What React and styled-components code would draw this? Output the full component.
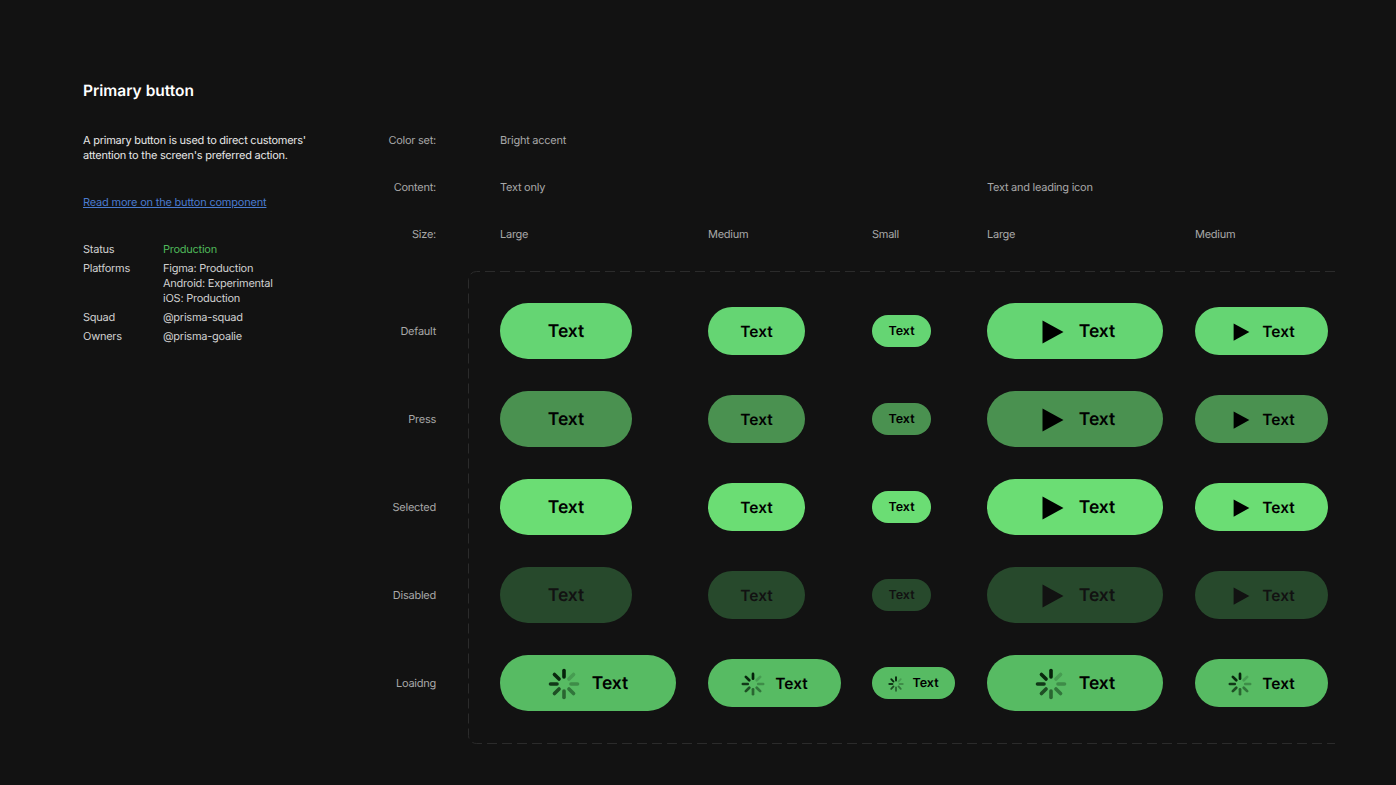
import React from 'react';
import styled, { createGlobalStyle } from 'styled-components';

const GlobalStyle = createGlobalStyle`
  html, body { margin: 0; padding: 0; background: #121212; }
  body {
    font-family: "Inter", "Liberation Sans", sans-serif;
    text-rendering: geometricPrecision;
  }
`;

const sizes = {
  large: { height: 56, plain: 132, icon: 176, font: 17.5, box: 32, gap: 12 },
  medium: { height: 48, plain: 97, icon: 133, font: 15.5, box: 24, gap: 10 },
  small: { height: 32, plain: 59, icon: 83, font: 12.5, box: 16, gap: 8 },
};

const stateColors = {
  default: { bg: '#65d573', fg: '#000' },
  press: { bg: '#4a9150', fg: '#000' },
  selected: { bg: '#6bdd74', fg: '#000' },
  disabled: { bg: '#27492c', fg: '#121212' },
  loading: { bg: '#57bb63', fg: '#000' },
};

const columns = '208px 164px 115px 208px 133px';

function PlayIcon({ size }) {
  return (
    <svg width={size} height={size} viewBox="0 0 32 32" fill="currentColor">
      <path d="M7.5 4.5v23L28.5 16z" />
    </svg>
  );
}

const spokes = [
  [0, 1], [45, 0.2], [90, 0.3], [135, 0.45],
  [180, 0.55], [225, 0.7], [270, 0.85], [315, 0.95],
];

function Spinner({ size }) {
  return (
    <svg width={size} height={size} viewBox="0 0 32 32" fill="none" stroke="#05210a" strokeWidth="3.6" strokeLinecap="round">
      {spokes.map(([angle, opacity]) => (
        <line key={angle} x1="16" y1="2.5" x2="16" y2="9" opacity={opacity} transform={`rotate(${angle} 16 16)`} />
      ))}
    </svg>
  );
}

function DemoButton({ size, state, content }) {
  const hasIcon = content !== 'text';
  const box = sizes[size].box;
  return (
    <Pill $size={size} $state={state} $wide={hasIcon}>
      {content === 'play' && <PlayIcon size={box} />}
      {content === 'spinner' && <Spinner size={box} />}
      Text
    </Pill>
  );
}

const rows = [
  { label: 'Default', state: 'default' },
  { label: 'Press', state: 'press' },
  { label: 'Selected', state: 'selected' },
  { label: 'Disabled', state: 'disabled' },
  { label: 'Loaidng', state: 'loading' },
];

function App() {
  return (
    <Page>
      <GlobalStyle />
      <Sidebar>
        <Title>Primary button</Title>
        <Description>
          A primary button is used to direct customers'<br />
          attention to the screen's preferred action.
        </Description>
        <ReadMore href="#">Read more on the button component</ReadMore>
        <MetaList>
          <dt>Status</dt>
          <MetaValue $green>Production</MetaValue>
          <dt>Platforms</dt>
          <MetaValue>Figma: Production<br />Android: Experimental<br />iOS: Production</MetaValue>
          <dt>Squad</dt>
          <MetaValue>@prisma-squad</MetaValue>
          <dt>Owners</dt>
          <MetaValue>@prisma-goalie</MetaValue>
        </MetaList>
      </Sidebar>
      <Main>
        <SpecGrid>
          <SpecLabel>Color set:</SpecLabel>
          <SpecValue $span={5}>Bright accent</SpecValue>
          <SpecLabel>Content:</SpecLabel>
          <SpecValue $span={3}>Text only</SpecValue>
          <SpecValue $span={2}>Text and leading icon</SpecValue>
          <SpecLabel>Size:</SpecLabel>
          <SpecValue>Large</SpecValue>
          <SpecValue>Medium</SpecValue>
          <SpecValue>Small</SpecValue>
          <SpecValue>Large</SpecValue>
          <SpecValue>Medium</SpecValue>
        </SpecGrid>
        <Matrix>
          <StateLabels>
            {rows.map((row) => (
              <StateLabel key={row.label}>{row.label}</StateLabel>
            ))}
          </StateLabels>
          <Frame>
            <FrameLine width="867" height="473" fill="none">
              <path d="M867 .5H8.5a8 8 0 0 0-8 8v456a8 8 0 0 0 8 8H867" stroke="#2b2b2b" strokeDasharray="10 5" />
            </FrameLine>
            {rows.map(({ label, state }) => {
              const loading = state === 'loading';
              return (
                <ButtonRow key={label}>
                  <DemoButton size="large" state={state} content={loading ? 'spinner' : 'text'} />
                  <DemoButton size="medium" state={state} content={loading ? 'spinner' : 'text'} />
                  <DemoButton size="small" state={state} content={loading ? 'spinner' : 'text'} />
                  <DemoButton size="large" state={state} content={loading ? 'spinner' : 'play'} />
                  <DemoButton size="medium" state={state} content={loading ? 'spinner' : 'play'} />
                </ButtonRow>
              );
            })}
          </Frame>
        </Matrix>
      </Main>
    </Page>
  );
}

export default App;

const Page = styled.div`
  display: flex;
  box-sizing: border-box;
  width: 1396px;
  height: 785px;
  padding: 81px 0 0 83px;
  background: #121212;
  overflow: hidden;
`;
const Sidebar = styled.aside`
  width: 287px;
  flex: none;
`;
const Title = styled.h1`
  margin: 0;
  font-size: 15.5px;
  line-height: 20px;
  font-weight: 600;
  color: #fff;
`;
const Description = styled.p`
  margin: 32px 0 0;
  font-size: 11px;
  letter-spacing: -0.25px;
  line-height: 15px;
  color: #e8e8e8;
`;
const ReadMore = styled.a`
  display: block;
  margin-top: 32px;
  font-size: 11px;
  letter-spacing: -0.2px;
  line-height: 15px;
  color: #4a7bd0;
  text-decoration: underline;
`;
const MetaList = styled.dl`
  display: grid;
  grid-template-columns: 80px 1fr;
  row-gap: 4px;
  margin: 32px 0 0;
  font-size: 11px;
  letter-spacing: -0.25px;
  line-height: 15px;
  color: #d0d0d0;
`;
const MetaValue = styled.dd`
  margin: 0;
  color: ${(p) => (p.$green ? '#4fb85a' : '#d0d0d0')};
`;
const Main = styled.main`
  flex: 1;
  padding-top: 52px;
`;
const SpecGrid = styled.div`
  display: grid;
  grid-template-columns: 130px ${columns};
  row-gap: 32px;
  font-size: 11px;
  letter-spacing: -0.25px;
  line-height: 15px;
  color: #a8a8a8;
`;
const SpecLabel = styled.div`
  width: 66px;
  text-align: right;
`;
const SpecValue = styled.div`
  grid-column: span ${(p) => p.$span || 1};
`;
const Matrix = styled.div`
  display: flex;
  gap: 32px;
  margin-top: 29px;
`;
const StateLabels = styled.div`
  display: flex;
  flex-direction: column;
  width: 66px;
  padding-top: 16px;
`;
const StateLabel = styled.div`
  display: flex;
  align-items: center;
  justify-content: flex-end;
  height: 88px;
  font-size: 11px;
  letter-spacing: -0.25px;
  color: #a8a8a8;
`;
const Frame = styled.div`
  position: relative;
  box-sizing: border-box;
  width: 867px;
  height: 473px;
  padding: 16px 0 0 32px;
`;
const FrameLine = styled.svg`
  position: absolute;
  top: 0;
  left: 0;
`;
const ButtonRow = styled.div`
  display: grid;
  grid-template-columns: ${columns};
  align-items: center;
  justify-items: start;
  height: 88px;
`;
const Pill = styled.div`
  display: flex;
  align-items: center;
  justify-content: center;
  box-sizing: border-box;
  gap: ${(p) => (p.$wide ? sizes[p.$size].gap : 0)}px;
  width: ${(p) => (p.$wide ? sizes[p.$size].icon : sizes[p.$size].plain)}px;
  height: ${(p) => sizes[p.$size].height}px;
  padding-top: 1px;
  border-radius: ${(p) => sizes[p.$size].height / 2}px;
  background: ${(p) => stateColors[p.$state].bg};
  color: ${(p) => stateColors[p.$state].fg};
  font-size: ${(p) => sizes[p.$size].font}px;
  font-weight: 600;
`;
